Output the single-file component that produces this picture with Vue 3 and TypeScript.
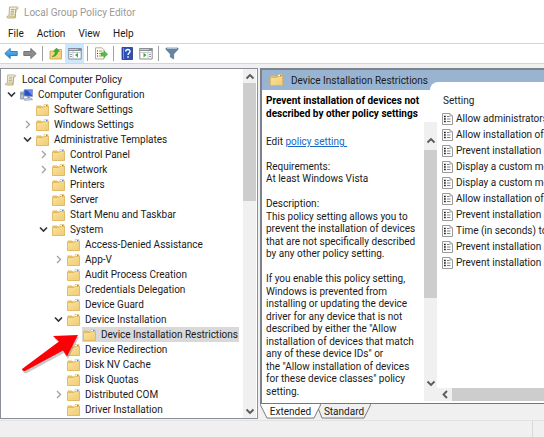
<script setup lang="ts">
import { ref } from 'vue'

interface TreeNode {
  label: string
  level: number
  state: 'open' | 'closed' | 'leaf'
  icon: 'scroll' | 'computer' | 'folder'
}

const node = (
  level: number,
  label: string,
  state: TreeNode['state'] = 'leaf',
  icon: TreeNode['icon'] = 'folder',
): TreeNode => ({ level, label, state, icon })

const nodes: TreeNode[] = [
  node(0, 'Local Computer Policy', 'leaf', 'scroll'),
  node(1, 'Computer Configuration', 'open', 'computer'),
  node(2, 'Software Settings'),
  node(2, 'Windows Settings', 'closed'),
  node(2, 'Administrative Templates', 'open'),
  node(3, 'Control Panel', 'closed'),
  node(3, 'Network', 'closed'),
  node(3, 'Printers'),
  node(3, 'Server'),
  node(3, 'Start Menu and Taskbar'),
  node(3, 'System', 'open'),
  node(4, 'Access-Denied Assistance'),
  node(4, 'App-V', 'closed'),
  node(4, 'Audit Process Creation'),
  node(4, 'Credentials Delegation'),
  node(4, 'Device Guard'),
  node(4, 'Device Installation', 'open'),
  node(5, 'Device Installation Restrictions'),
  node(4, 'Device Redirection'),
  node(4, 'Disk NV Cache'),
  node(4, 'Disk Quotas'),
  node(4, 'Distributed COM', 'closed'),
  node(4, 'Driver Installation'),
]

const selected = ref('Device Installation Restrictions')

const description: string[] = [
  '',
  'Requirements:',
  'At least Windows Vista',
  '',
  'Description:',
  'This policy setting allows you to',
  'prevent the installation of devices',
  'that are not specifically described',
  'by any other policy setting.',
  '',
  'If you enable this policy setting,',
  'Windows is prevented from',
  'installing or updating the device',
  'driver for any device that is not',
  'described by either the "Allow',
  'installation of devices that match',
  'any of these device IDs" or',
  'the "Allow installation of devices',
  'for these device classes" policy',
  'setting.',
]

const settings: string[] = [
  'Allow administrators to override Device Installation Restriction policies',
  'Allow installation of devices using drivers that match these classes',
  'Prevent installation of devices using drivers that match these classes',
  'Display a custom message when installation is prevented by policy',
  'Display a custom message title when installation is prevented',
  'Allow installation of devices that match any of these device IDs',
  'Prevent installation of devices that match any of these device IDs',
  'Time (in seconds) to force reboot when required for policy changes',
  'Prevent installation of removable devices',
  'Prevent installation of devices not described by other policy settings',
]
</script>

<template>
  <div class="window">
    <svg class="defs" width="0" height="0" aria-hidden="true">
      <defs>
        <linearGradient id="fold" x1="0" y1="0" x2="1" y2="1">
          <stop offset="0" stop-color="#fbe39c" /><stop offset="1" stop-color="#f0cb74" />
        </linearGradient>
        <linearGradient id="blue" x1="0" y1="0" x2="0" y2="1">
          <stop offset="0" stop-color="#6cc0f4" /><stop offset="1" stop-color="#1f7fd0" />
        </linearGradient>
      </defs>
      <symbol id="folder" viewBox="0 0 13 12">
        <path d="M.5 1.500H5l1 1h6.500v9H.5z" fill="#e5bd62" />
        <path d="M8 .5h4v3H8z" fill="#fff" stroke="#d8b765" stroke-width=".6" />
        <path d="M10 1h1.500v1H10z" fill="#4a90d0" />
        <path d="M.5 3.500h6.500l1-1h4.500v9H.5z" fill="url(#fold)" stroke="#dcb45c" stroke-width=".8" />
      </symbol>
      <symbol id="scroll" viewBox="0 0 13 13">
        <path d="M3.500 1h7.500c1.500 0 1.500 2 0 2h-1L9 12H2C.3 12 .5 10 2 10h1z" fill="#f7f0cf" stroke="#9b9479" stroke-width=".7" />
        <path d="M5 3.500h3.500M4.700 5.300h3.500M4.500 7h3.500M4.300 8.800h3.500" stroke="#8a8a80" stroke-width=".7" />
        <path d="M3 10h5l1 2H2.500z" fill="#d9c480" />
        <path d="M10 3l-1 9" stroke="#b9a45e" />
      </symbol>
      <symbol id="computer" viewBox="0 0 13 12">
        <path d="M4 .8l8.500-.3v7L4 7z" fill="#2a4fc8" stroke="#8e9cc4" stroke-width=".8" />
        <path d="M7 1l5 0v5.500z" fill="#5f8df0" />
        <path d="M.6 3h3v7h-3z" fill="#b9c2d4" stroke="#72809c" stroke-width=".7" />
        <path d="M1 5h2.200" stroke="#3da35a" />
        <path d="M4.500 9.500l7-.5 1 1.800-8 .6z" fill="#c9cfdb" stroke="#7d879c" stroke-width=".5" />
        <path d="M7.500 7.500h2v1.500h-2z" fill="#7786a8" />
      </symbol>
      <symbol id="sheet" viewBox="0 0 11 12">
        <path d="M.5.5h7.500l2.500 2.500v8.500H.5z" fill="#fff" stroke="#9a9a9a" />
        <path d="M8 .5V3h2.500" fill="none" stroke="#9a9a9a" stroke-width=".8" />
        <path d="M2 3.500h1.800M2 6h1.800M2 8.500h1.800" stroke="#222" stroke-width="1.300" />
        <path d="M5 3.500h2.500M5 6h3.500M5 8.500h3.500" stroke="#7b8089" />
      </symbol>
      <symbol id="up" viewBox="0 0 10 7">
        <path d="M1.500 5.500L5 2l3.500 3.500" fill="none" stroke="#5a5a5a" stroke-width="1.800" />
      </symbol>
    </svg>

    <header class="title">
      <svg class="title-icon"><use href="#scroll" /></svg>
      <span>Local Group Policy Editor</span>
    </header>

    <nav class="menu">
      <button type="button">File</button>
      <button type="button">Action</button>
      <button type="button">View</button>
      <button type="button">Help</button>
    </nav>

    <div class="toolbar">
      <button type="button" aria-label="Back">
        <svg viewBox="0 0 14 12"><path d="M.8 6L6.200 1v3h7v4h-7v3z" fill="url(#blue)" stroke="#2277b8" stroke-width=".9" /></svg>
      </button>
      <button type="button" aria-label="Forward">
        <svg viewBox="0 0 14 12"><path d="M13.200 6L7.800 1v3h-7v4h7v3z" fill="#8d8d8d" stroke="#6c6c6c" stroke-width=".9" /></svg>
      </button>
      <i class="sep"></i>
      <button type="button" aria-label="Up one level">
        <svg viewBox="0 0 14 13">
          <path d="M1 4h4l1-1.500h6.500V12H1z" fill="#f3d27a" stroke="#c99f44" stroke-width=".8" />
          <path d="M3 9.500C5 9 6.200 7 6.200 4.500H4.500L7.500 1l3 3.500H8.700C8.700 7.500 6 10 3 9.500z" fill="#3dac34" stroke="#2b8a27" stroke-width=".4" />
        </svg>
      </button>
      <button type="button" class="on" aria-label="Show or hide the console tree">
        <svg viewBox="0 0 14 13">
          <path d="M.8 1.500h12.400v10.500H.8z" fill="#fff" stroke="#828b94" />
          <path d="M.5 1h13v3H.5z" fill="#838d97" />
          <path d="M1 2.500h9M5 4v8M1 5.500h12" stroke="#c5ccd3" />
          <path d="M2 7.500h2M2 9.500h2" stroke="#8d98a3" />
          <path d="M10 5.800v4.600L7 8.100z" fill="#42a744" />
        </svg>
      </button>
      <i class="sep"></i>
      <button type="button" aria-label="Export list">
        <svg viewBox="0 0 14 13">
          <path d="M1.500.8H8l2 2V12H1.500z" fill="#fffdf0" stroke="#aaa791" stroke-width=".9" />
          <path d="M3 4h1M3 6.500h1M3 9h1" stroke="#333" /><path d="M5 4h3.500M5 6.500h3M5 9h3.500" stroke="#9b9b91" />
          <path d="M7 5.800h3V3.800l3.700 3.500L10 10.800v-2H7z" fill="#52bd43" stroke="#319130" stroke-width=".4" />
        </svg>
      </button>
      <i class="sep"></i>
      <button type="button" aria-label="Help">
        <svg viewBox="0 0 14 13">
          <path d="M2 .5h10.500v12H2z" fill="#2f51b6" stroke="#20357d" stroke-width=".8" />
          <path d="M3.500 1v11" stroke="#7b93df" />
          <path d="M5.700 4.500C5.800 1.800 10.200 2 10 4.500 9.900 6 8 6 8 8" fill="none" stroke="#fff" stroke-width="1.400" />
          <path d="M7.300 9.200h1.500v1.500H7.300z" fill="#fff" />
        </svg>
      </button>
      <button type="button" aria-label="Show or hide the action pane">
        <svg viewBox="0 0 14 13">
          <path d="M.8 1.500h12.400v10.500H.8z" fill="#fff" stroke="#8a8f94" />
          <path d="M.5 1h13v3H.5z" fill="#8b9095" />
          <path d="M1 2.500h9M9 4v8M1 5.500h12" stroke="#c9cdd1" />
          <path d="M10 7.500h2M10 9.500h2" stroke="#8d98a3" />
          <path d="M4.500 5.800v4.600l3-2.300z" fill="#42a744" />
        </svg>
      </button>
      <i class="sep"></i>
      <button type="button" aria-label="Filter">
        <svg viewBox="0 0 14 13">
          <path d="M1 1h12v1.500L8.700 7v5L5.300 10V7L1 2.500z" fill="#6684a0" stroke="#526d86" stroke-width=".6" />
          <path d="M2 1.500h10" stroke="#a9bfd1" />
        </svg>
      </button>
    </div>

    <main class="panes">
      <section class="tree-pane">
        <ul class="tree">
          <li v-for="n in nodes" :key="n.label" :class="['row', 'level-' + n.level]">
            <span v-if="n.level > 0" class="twist">
              <svg v-if="n.state === 'open'" viewBox="0 0 9 9"><path d="M1 2.500L4.500 6 8 2.500" fill="none" stroke="#333" stroke-width="1.600" /></svg>
              <svg v-if="n.state === 'closed'" viewBox="0 0 9 9"><path d="M3 1l3.500 3.500L3 8" fill="none" stroke="#a0a0a0" stroke-width="1.300" /></svg>
            </span>
            <button type="button" :class="['node', { picked: n.label === selected }]" @click="selected = n.label">
              <svg class="node-icon"><use :href="'#' + n.icon" /></svg>
              <span>{{ n.label }}</span>
            </button>
          </li>
        </ul>
        <div class="vbar tree-bar">
          <button type="button" aria-label="Scroll up"><svg><use href="#up" /></svg></button>
          <i class="thumb"></i>
          <button type="button" class="down" aria-label="Scroll down"><svg><use href="#up" /></svg></button>
        </div>
        <svg class="pointer" viewBox="0 0 62 42" aria-hidden="true">
          <path d="M57 4L32 5l6 6L1 38q0 3 4 2l37-20 4 6z" fill="#777" opacity=".4" transform="translate(1 1)" />
          <path d="M57 3L32 4l6 5.500L1 37q0 2 3 2l38-20.500 4 6z" fill="#fb0007" />
        </svg>
      </section>

      <section class="detail-pane">
        <h1 class="banner">
          <svg class="node-icon"><use href="#folder" /></svg>
          <span>Device Installation Restrictions</span>
        </h1>
        <div class="sheet">
          <article class="info">
            <h2>Prevent installation of devices not<br />described by other policy settings</h2>
            <div class="scroller">
              <div class="lines">
                <span>Edit <a href="#setting">policy setting&nbsp;</a></span>
                <span v-for="(line, i) in description" :key="i">{{ line }}</span>
              </div>
              <div class="vbar info-bar">
                <button type="button" aria-label="Scroll up"><svg><use href="#up" /></svg></button>
                <i class="thumb"></i>
                <button type="button" class="down" aria-label="Scroll down"><svg><use href="#up" /></svg></button>
              </div>
            </div>
          </article>
          <div class="list">
            <table>
              <thead>
                <tr><th>Setting</th></tr>
              </thead>
              <tbody>
                <tr v-for="s in settings" :key="s">
                  <td><svg class="sheet-icon"><use href="#sheet" /></svg>{{ s }}</td>
                </tr>
              </tbody>
            </table>
            <div class="hbar">
              <button type="button" aria-label="Scroll left"><svg><use href="#up" /></svg></button>
              <i class="thumb"></i>
            </div>
          </div>
        </div>
        <div class="tabs">
          <button type="button" class="tab active">
            <svg viewBox="0 0 61 16" preserveAspectRatio="none"><path d="M0 0l7 15h47l7-15" fill="#fff" stroke="#777" /></svg>
            <span>Extended</span>
          </button>
          <button type="button" class="tab">
            <svg viewBox="0 0 54 16" preserveAspectRatio="none"><path d="M3 1L1 4l4 11h42l7-15" fill="#f0f0f0" stroke="#777" /></svg>
            <span>Standard</span>
          </button>
        </div>
      </section>
    </main>
    <footer class="status"><i></i></footer>
  </div>
</template>

<style>
body {
  background: #f0f0f0;
}
</style>

<style scoped>
.window {
  display: flex;
  flex-direction: column;
  height: 100vh;
  overflow: hidden;
  background: #f0f0f0;
  color: #1a1a1a;
  font-family: Roboto, "Open Sans", sans-serif;
  font-size: 10px;
}
.defs {
  position: absolute;
}
button {
  margin: 0;
  padding: 0;
  border: 0;
  background: none;
  color: inherit;
  font: inherit;
}
.title {
  display: flex;
  align-items: center;
  gap: 5px;
  height: 24px;
  padding-left: 6px;
  background: #fff;
  color: #999;
}
.title-icon {
  width: 13px;
  height: 13px;
}
.menu {
  display: flex;
  align-items: flex-start;
  gap: 13px;
  height: 19px;
  padding-left: 8px;
  background: #fff;
}
.menu button {
  line-height: 19px;
}
.toolbar {
  display: flex;
  align-items: center;
  height: 19px;
  padding-left: 1px;
  border-top: 1px solid #d5d5d5;
  border-bottom: 1px solid #d5d5d5;
  background: #fff;
}
.toolbar button {
  display: flex;
  align-items: center;
  justify-content: center;
  width: 19px;
  height: 19px;
}
.toolbar svg {
  width: 14px;
  height: 13px;
}
.toolbar .on {
  background: #cce8ff;
}
.sep {
  width: 1px;
  height: 15px;
  margin: 0 3px;
  background: #a0a0a0;
}
.panes {
  display: flex;
  flex: 1;
  gap: 2px;
  min-height: 0;
  padding-top: 4px;
}
.tree-pane {
  position: relative;
  display: flex;
  flex: none;
  width: 258px;
  box-sizing: border-box;
  border: 1px solid #8b8f98;
  background: #fff;
}
.tree {
  flex: 1;
  min-width: 0;
  margin: 0;
  padding: 3px 0 0;
  list-style: none;
}
.row {
  display: flex;
  height: 15px;
}
.level-0 { padding-left: 2px; }
.level-1 { padding-left: 6px; }
.level-2 { padding-left: 22px; }
.level-3 { padding-left: 38px; }
.level-4 { padding-left: 53px; }
.level-5 { padding-left: 69px; }
.twist {
  display: flex;
  align-items: center;
  width: 12px;
}
.twist svg {
  width: 9px;
  height: 9px;
}
.node {
  display: flex;
  align-items: center;
  gap: 5px;
  padding: 0 1px;
  white-space: nowrap;
}
.picked {
  background: #d9d9d9;
}
.node-icon {
  width: 13px;
  height: 12px;
}
.vbar {
  display: flex;
  flex: none;
  flex-direction: column;
  width: 13px;
  background: #f0f0f0;
}
.vbar button,
.hbar button {
  display: flex;
  align-items: center;
  justify-content: center;
  width: 13px;
  height: 14px;
}
.vbar svg,
.hbar svg {
  width: 10px;
  height: 7px;
}
.thumb {
  background: #cdcdcd;
}
.vbar .down {
  margin-top: auto;
}
.down svg {
  transform: rotate(180deg);
}
.tree-bar {
  margin-right: 1px;
}
.tree-bar .thumb {
  height: 118px;
}
.pointer {
  position: absolute;
  top: 263px;
  left: 20px;
  width: 62px;
  height: 42px;
}
.detail-pane {
  display: flex;
  flex: 1;
  flex-direction: column;
  min-width: 0;
  border-top: 2px solid #7d828a;
}
.banner {
  display: flex;
  align-items: center;
  gap: 8px;
  height: 20px;
  margin: 0;
  padding-left: 8px;
  border-left: 2px solid #7d828a;
  background: #99b4d1;
  font-size: 10px;
  font-weight: 400;
}
.sheet {
  display: flex;
  flex: 1;
  min-height: 0;
  border-left: 2px solid #7d828a;
  background: #fff;
}
.info {
  display: flex;
  flex: none;
  flex-direction: column;
  width: 175px;
}
.info h2 {
  margin: 0;
  padding: 4px 0 2px 4px;
  font-size: 10px;
  line-height: 13px;
  color: #000;
  white-space: nowrap;
}
.scroller {
  display: flex;
  flex: 1;
  min-height: 0;
}
.lines {
  display: grid;
  flex: 1;
  grid-auto-rows: 12px 13px;
  align-content: start;
  min-width: 0;
  padding: 13px 0 0 4px;
  line-height: 13px;
  white-space: nowrap;
}
.lines a {
  color: #1a66c4;
}
.info-bar {
  box-sizing: border-box;
  margin-bottom: 2px;
  padding: 8px 0;
}
.info-bar button {
  height: 20px;
}
.info-bar .thumb {
  height: 148px;
}
.list {
  display: flex;
  flex: 1;
  flex-direction: column;
  min-width: 0;
  margin: -8px 0 0 -7px;
  padding-left: 7px;
  overflow: hidden;
  border-top-left-radius: 8px;
  background: #fff;
}
.info h2,
.info .scroller {
  position: relative;
  z-index: 1;
}
.list table {
  border-collapse: collapse;
  table-layout: fixed;
  width: 100%;
}
.list th {
  height: 21px;
  padding: 8px 0 0 6px;
  font-weight: 400;
  text-align: left;
}
.list td {
  height: 16px;
  padding: 0 0 0 5px;
  line-height: 16px;
  overflow: hidden;
  white-space: nowrap;
}
.sheet-icon {
  width: 11px;
  height: 12px;
  margin-right: 3px;
  vertical-align: middle;
}
.hbar {
  display: flex;
  height: 13px;
  margin-top: auto;
  margin-bottom: 2px;
  background: #f0f0f0;
}
.hbar button {
  width: 15px;
  height: 13px;
}
.hbar svg {
  transform: rotate(-90deg);
}
.hbar .thumb {
  flex: 1;
}
.tabs {
  display: flex;
  height: 15px;
  border-top: 1px solid #777;
}
.tab {
  position: relative;
  width: 54px;
  height: 15px;
}
.tab.active {
  z-index: 1;
  width: 61px;
  margin-right: -4px;
}
.tab svg {
  position: absolute;
  inset: 0;
  width: 100%;
  height: 100%;
}
.tab span {
  position: relative;
}
.status {
  display: flex;
  justify-content: flex-end;
  height: 16px;
  margin-top: 1px;
  border-top: 1px solid #e2e2e2;
}
.status i {
  width: 11px;
  border-left: 1px solid #d9d9d9;
}
</style>
